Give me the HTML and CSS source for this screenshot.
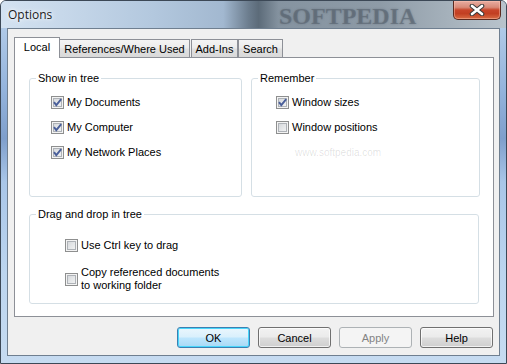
FILE: index.html
```html
<!DOCTYPE html>
<html>
<head>
<meta charset="utf-8">
<title>Options</title>
<link rel="stylesheet" href="styles.css">
</head>
<body>
<div class="window">
  <div class="titlebar">
    <span class="title">Options</span>
    <span class="wm-title">SOFTPEDIA</span>
    <button class="close" aria-label="Close">
      <svg width="16" height="12" viewBox="0 0 16 12">
        <path d="M3 2 L13 10 M13 2 L3 10" stroke="#3a3a3a" stroke-width="4.6" stroke-linecap="round"/>
        <path d="M3 2 L13 10 M13 2 L3 10" stroke="#ffffff" stroke-width="2.6" stroke-linecap="round"/>
      </svg>
    </button>
  </div>
  <div class="client">
    <div class="tabs">
      <div class="tab selected t-local">Local</div>
      <div class="tab t-refs">References/Where Used</div>
      <div class="tab t-add">Add-Ins</div>
      <div class="tab t-search">Search</div>
    </div>
    <div class="panel">
      <div class="row">
        <fieldset class="group g-tree">
          <legend>Show in tree</legend>
          <div class="items">
            <label class="check"><span class="box"><svg class="mark" width="13" height="13" viewBox="0 0 13 13"><path d="M3 6.2 L5.3 9.2 L10.2 3.2" fill="none" stroke="#4a5f9a" stroke-width="1.9"/></svg></span>My Documents</label>
            <label class="check"><span class="box"><svg class="mark" width="13" height="13" viewBox="0 0 13 13"><path d="M3 6.2 L5.3 9.2 L10.2 3.2" fill="none" stroke="#4a5f9a" stroke-width="1.9"/></svg></span>My Computer</label>
            <label class="check"><span class="box"><svg class="mark" width="13" height="13" viewBox="0 0 13 13"><path d="M3 6.2 L5.3 9.2 L10.2 3.2" fill="none" stroke="#4a5f9a" stroke-width="1.9"/></svg></span>My Network Places</label>
          </div>
        </fieldset>
        <fieldset class="group g-rem">
          <legend>Remember</legend>
          <div class="items">
            <label class="check"><span class="box"><svg class="mark" width="13" height="13" viewBox="0 0 13 13"><path d="M3 6.2 L5.3 9.2 L10.2 3.2" fill="none" stroke="#4a5f9a" stroke-width="1.9"/></svg></span>Window sizes</label>
            <label class="check"><span class="box"></span>Window positions</label>
          </div>
        </fieldset>
      </div>
      <fieldset class="group g-drag">
        <legend>Drag and drop in tree</legend>
        <div class="items">
          <label class="check"><span class="box"></span>Use Ctrl key to drag</label>
          <label class="check"><span class="box"></span><span>Copy referenced documents<br>to working folder</span></label>
        </div>
      </fieldset>
      <span class="wm-url">www.softpedia.com</span>
    </div>
    <div class="buttons">
      <button class="btn default">OK</button>
      <button class="btn">Cancel</button>
      <button class="btn disabled">Apply</button>
      <button class="btn">Help</button>
    </div>
  </div>
</div>
</body>
</html>
```
FILE: styles.css
```css
* { box-sizing: border-box; }
html, body { margin: 0; padding: 0; }
body {
  width: 507px;
  height: 364px;
  overflow: hidden;
  background: #ffffff;
  font-family: "Liberation Sans", Arial, sans-serif;
  font-size: 11px;
  color: #000;
}
.window {
  width: 507px;
  height: 364px;
  display: flex;
  flex-direction: column;
  border: 1px solid #3c4856;
  border-radius: 6px 6px 0 0;
  background: linear-gradient(180deg, #bcd3ec 0%, #93b3dc 25%, #7f9fcc 38%, #a9c6e8 50%, #bcd5ef 75%, #c6dbf1 100%);
  padding: 0 6px 7px 6px;
  overflow: hidden;
}
.titlebar {
  flex: 0 0 27px;
  margin: 0 -6px;
  display: flex;
  align-items: flex-start;
  position: relative;
  background: linear-gradient(90deg, #d3e2f1 0%, #c7d8ea 12%, #b3c8de 30%, #a2b8d0 44%, #6c7d8e 49%, #5c6b79 51%, #8593a0 55%, #8e9ba7 75%, #a4b0ba 88%, #b8c3cc 100%);
}
.title {
  padding: 5px 0 0 7px;
  font-family: "Open Sans", "Noto Sans", sans-serif;
  font-size: 12px;
  line-height: 17px;
  color: #1b1b1b;
  text-shadow: 0 0 6px #ffffff, 0 0 3px #ffffff;
}
.wm-title {
  position: absolute;
  left: 278px;
  top: 3px;
  font-family: "Liberation Serif", serif;
  font-weight: bold;
  font-size: 24px;
  line-height: 24px;
  letter-spacing: 0;
  color: rgba(85, 96, 108, 0.55);
  text-shadow: 0 0 2px rgba(85, 96, 108, 0.5);
}
.close {
  margin: 0 5px 0 auto;
  width: 48px;
  height: 19px;
  padding: 0;
  border: 1px solid #5b2a20;
  border-top: none;
  border-radius: 0 0 5px 5px;
  background: linear-gradient(180deg, #e8ada1 0%, #d88a78 35%, #c8452a 50%, #c23f22 70%, #d86c44 100%);
  box-shadow: inset 0 0 0 1px rgba(255, 200, 180, 0.45);
  display: flex;
  align-items: center;
  justify-content: center;
  position: relative;
  z-index: 1;
}
.close svg { display: block; }
.client {
  flex: 0 0 328px;
  border: 1px solid #6f7f90;
  background: #f0f0f0;
  display: flex;
  flex-direction: column;
  padding: 8px 5px 0 6px;
}
.tabs {
  display: flex;
  align-items: flex-end;
  height: 21px;
  margin-bottom: -1px;
  position: relative;
  z-index: 2;
}
.tab {
  height: 18px;
  margin-bottom: 1px;
  border: 1px solid #8d9097;
  border-bottom: none;
  background: linear-gradient(180deg, #f4f4f4 0%, #ececec 45%, #e0e0e0 55%, #d9d9d9 100%);
  text-align: center;
  line-height: 18px;
  white-space: nowrap;
}
.tab.selected {
  height: 21px;
  margin-bottom: 0;
  background: #ffffff;
  line-height: 18px;
  position: relative;
  z-index: 1;
}
.t-local { width: 46px; }
.t-refs { width: 131px; margin-left: -1px; }
.t-add { width: 47px; margin-left: 1px; }
.t-search { width: 45px; }
.panel {
  flex: 0 0 260px;
  background: #ffffff;
  border: 1px solid #8d9097;
  padding: 14px 13px 0 14px;
  position: relative;
}
.row {
  display: flex;
  gap: 9px;
}
.group {
  margin: 0;
  padding: 0;
  min-width: 0;
  border: 1px solid #d5dfe5;
  border-radius: 3px;
}
.group legend {
  margin-left: 6px;
  padding: 0 2px;
  line-height: 13px;
  font-size: 11px;
}
.g-tree { width: 213px; height: 125px; }
.g-rem { width: 229px; height: 125px; }
.g-drag { width: 450px; height: 96px; margin-top: 11px; }
.items {
  display: flex;
  flex-direction: column;
  gap: 12px;
  padding-top: 11px;
}
.g-tree .items { padding-left: 21px; }
.g-rem .items { padding-left: 24px; }
.g-drag .items { padding-left: 35px; padding-top: 18px; gap: 14px; }
.check {
  display: flex;
  align-items: center;
  gap: 3px;
  line-height: 13px;
}
.box {
  flex: 0 0 13px;
  width: 13px;
  height: 13px;
  border: 1px solid #8e8f8f;
  background: linear-gradient(135deg, #cfd2d6 0%, #e4e6e8 50%, #f7f7f7 100%);
  box-shadow: inset 0 0 0 1px #f3f3f3, inset 0 0 0 2px #aeb2b7;
  position: relative;
}
.mark {
  position: absolute;
  left: -1px;
  top: -1px;
}
.wm-url {
  position: absolute;
  left: 280px;
  top: 89px;
  font-size: 10px;
  line-height: 12px;
  color: rgba(0, 0, 0, 0.12);
}
.buttons {
  display: flex;
  justify-content: flex-end;
  gap: 8px;
  margin-top: 10px;
  padding-right: 1px;
}
.btn {
  width: 73px;
  height: 21px;
  padding: 0;
  border: 1px solid #707070;
  border-radius: 3px;
  background: linear-gradient(180deg, #f2f2f2 0%, #ebebeb 48%, #dddddd 52%, #cfcfcf 100%);
  box-shadow: inset 0 0 0 1px rgba(255, 255, 255, 0.7);
  font-family: "Liberation Sans", Arial, sans-serif;
  font-size: 11px;
  color: #000;
}
.btn.default {
  border-color: #3c7fb1;
  background: linear-gradient(180deg, #eaf6fd 0%, #d9f0fc 48%, #bee6fd 52%, #a7d9f5 100%);
  box-shadow: inset 0 0 0 1px #48d6fb;
}
.btn.disabled {
  border-color: #adb2b5;
  background: #f4f4f4;
  box-shadow: none;
  color: #838383;
}
```
